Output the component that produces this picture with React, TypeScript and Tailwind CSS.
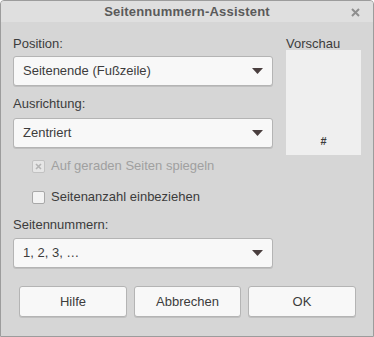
import React from "react";

function Arrow() {
  return (
    <svg width="11" height="6" viewBox="0 0 11 6" className="shrink-0">
      <path d="M0 0 H11 L5.5 6 Z" fill="#4a3f3f" />
    </svg>
  );
}

function Select({ value }: { value: string }) {
  return (
    <div className="h-[30px] w-[260px] flex items-center justify-between pl-[9px] pr-[9px] rounded-[3px] border border-[#b4b4b4] bg-[#f8f8f8] shadow-[0_1px_0_rgba(0,0,0,0.10)] text-[13px] text-[#3c3c3c]">
      <span>{value}</span>
      <Arrow />
    </div>
  );
}

function Btn({ label, w }: { label: string; w: string }) {
  return (
    <div className={`${w} h-[31px] flex items-center justify-center rounded-[3px] border border-[#b4b4b4] bg-[#f8f8f8] shadow-[0_1px_0_rgba(0,0,0,0.10)] text-[13px] text-[#3c3c3c]`}>
      {label}
    </div>
  );
}

export default function App() {
  return (
    <div
      className="w-[374px] h-[337px] bg-[#d6d6d6] border border-[#9c9c9c] rounded-t-[4px] flex flex-col overflow-hidden"
      style={{ fontFamily: '"Liberation Sans", Arial, sans-serif' }}
    >
      <div className="h-[21px] shrink-0 bg-[#dfdfdf] flex items-center justify-center relative">
        <span className="text-[13px] font-bold text-[#5a5a5a] tracking-[0.2px]">Seitennummern-Assistent</span>
        <svg width="9" height="9" viewBox="0 0 9 9" className="absolute right-[13px] top-[7px]">
          <path d="M1 1 L8 8 M8 1 L1 8" stroke="#8e8e8e" strokeWidth="2" />
        </svg>
      </div>
      <div className="flex pl-[12px] pt-[14px]">
        <div className="w-[260px] flex flex-col">
          <div className="h-[16px] leading-[16px] text-[13px] text-[#3c3c3c]">Position:</div>
          <div className="mt-[4px]">
            <Select value="Seitenende (Fußzeile)" />
          </div>
          <div className="mt-[10px] h-[16px] leading-[16px] text-[13px] text-[#3c3c3c]">Ausrichtung:</div>
          <div className="mt-[6px]">
            <Select value="Zentriert" />
          </div>
          <div className="mt-[10px] h-[16px] flex items-center pl-[19px] gap-[6px]">
            <div className="w-[13px] h-[13px] rounded-[2px] border border-[#c2c2c2] bg-[#e6e6e6] flex items-center justify-center">
              <svg width="7" height="7" viewBox="0 0 7 7">
                <path d="M1 1 L6 6 M6 1 L1 6" stroke="#b4b4b4" strokeWidth="1.6" />
              </svg>
            </div>
            <span className="text-[13px] text-[#a0a0a0] leading-[16px]">Auf geraden Seiten spiegeln</span>
          </div>
          <div className="mt-[15px] h-[16px] flex items-center pl-[19px] gap-[6px]">
            <div className="w-[13px] h-[13px] rounded-[2px] border border-[#a8a8a8] bg-[#f3f3f3]" />
            <span className="text-[13px] text-[#3c3c3c] leading-[16px]">Seitenanzahl einbeziehen</span>
          </div>
          <div className="mt-[12px] h-[16px] leading-[16px] text-[13px] text-[#3c3c3c]">Seitennummern:</div>
          <div className="mt-[5px]">
            <Select value="1, 2, 3, …" />
          </div>
        </div>
        <div className="ml-[13px] w-[75px] flex flex-col">
          <div className="h-[16px] leading-[16px] text-[13px] text-[#3c3c3c]">Vorschau</div>
          <div className="mt-[-2px] h-[105px] bg-[#efefef] flex items-end justify-center pb-[6px]">
            <span className="text-[11px] font-bold text-[#3c3c3c]">#</span>
          </div>
        </div>
      </div>
      <div className="flex pl-[18px] gap-[7px] mt-[18px]">
        <Btn label="Hilfe" w="w-[108px]" />
        <Btn label="Abbrechen" w="w-[107px]" />
        <Btn label="OK" w="w-[108px]" />
      </div>
    </div>
  );
}
